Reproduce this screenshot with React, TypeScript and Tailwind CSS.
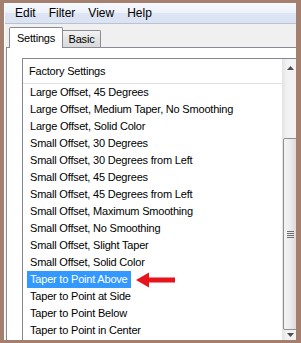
const presets = [
  "Large Offset, 45 Degrees",
  "Large Offset, Medium Taper, No Smoothing",
  "Large Offset, Solid Color",
  "Small Offset, 30 Degrees",
  "Small Offset, 30 Degrees from Left",
  "Small Offset, 45 Degrees",
  "Small Offset, 45 Degrees from Left",
  "Small Offset, Maximum Smoothing",
  "Small Offset, No Smoothing",
  "Small Offset, Slight Taper",
  "Small Offset, Solid Color",
  "Taper to Point Above",
  "Taper to Point at Side",
  "Taper to Point Below",
  "Taper to Point in Center",
];

const selected = "Taper to Point Above";

const RedArrow = () => (
  <svg width="40" height="16" viewBox="0 0 40 16" className="ml-[5px] shrink-0">
    <polygon points="0,8 13,0.5 13,5.5 39,5.5 39,10.5 13,10.5 13,15.5" fill="#e8141c" />
  </svg>
);

const ScrollBar = () => (
  <div className="w-[17px] shrink-0 flex flex-col bg-[linear-gradient(90deg,#e3e3e3,#f2f2f2_30%,#f2f2f2)]">
    <div className="h-[17px] flex items-center justify-center">
      <svg width="7" height="4" viewBox="0 0 7 4">
        <polygon points="0,4 3.5,0 7,4" fill="#4d4d4d" />
      </svg>
    </div>
    <div className="h-[62px]" />
    <div className="h-[192px] mx-[1px] rounded-[2px] border border-[#8f8f8f] bg-[linear-gradient(90deg,#f4f4f4,#ececec_45%,#d9d9d9)] flex items-center justify-center">
      <div className="flex flex-col gap-[1px]">
        <div className="w-[7px] h-[1px] bg-[#6f6f6f]" />
        <div className="w-[7px] h-[1px] bg-[#6f6f6f]" />
        <div className="w-[7px] h-[1px] bg-[#6f6f6f]" />
        <div className="w-[7px] h-[1px] bg-[#6f6f6f]" />
      </div>
    </div>
    <div className="h-[17px] flex justify-center pt-[3px]">
      <svg width="7" height="4" viewBox="0 0 7 4">
        <polygon points="0,0 3.5,4 7,0" fill="#4d4d4d" />
      </svg>
    </div>
  </div>
);

export default function App() {
  return (
    <div
      className="w-[301px] h-[343px] overflow-hidden bg-[#a47f6d] pt-[3px] pl-[4px] pr-[5px] pb-[3px] text-[11px] tracking-[-0.2px] text-black"
      style={{ fontFamily: "'Liberation Sans', Arial, sans-serif" }}
    >
      <div className="w-full h-full overflow-hidden bg-[#f0f0f0] border-l border-white flex flex-col">
        <div className="h-[21px] shrink-0 flex items-center gap-[13px] pl-[10px] text-[12px] tracking-normal border-b border-[#b9c2d3] bg-[linear-gradient(#f6f8fc_0%,#edf2fa_50%,#dde5f4_50%,#dbe3f3_100%)]">
          <span>Edit</span>
          <span>Filter</span>
          <span>View</span>
          <span>Help</span>
        </div>

        <div className="h-[23px] shrink-0 flex items-end pl-[4px]">
          <div className="relative z-10 -mb-[1px] h-[21px] w-[54px] flex items-center justify-center bg-white border border-b-0 border-[#898c95] rounded-t-[2px]">
            Settings
          </div>
          <div className="h-[17px] w-[38px] flex items-center justify-center border border-b-0 border-l-0 border-[#898c95] rounded-tr-[2px] bg-[linear-gradient(#f3f3f3,#e3e3e3_50%,#dadada)]">
            Basic
          </div>
        </div>

        <div className="flex-1 ml-[1px] bg-white border-l border-t border-[#898c95] pl-[15px] pt-[10px]">
          <div className="w-[278px] h-[300px] border border-[#828790] bg-white flex">
            <div className="w-[259px] shrink-0 flex flex-col">
              <div className="h-[25px] shrink-0 flex items-center pl-[6px] border-b border-[#e2e2e2]">
                Factory Settings
              </div>
              {presets.map((p) => (
                <div key={p} className="h-[17px] shrink-0 flex items-center pl-[4px] whitespace-nowrap">
                  {p === selected ? (
                    <>
                      <span className="h-[17px] flex items-center px-[3px] bg-[#3399ff] text-white">{p}</span>
                      <RedArrow />
                    </>
                  ) : (
                    <span className="px-[3px]">{p}</span>
                  )}
                </div>
              ))}
            </div>
            <ScrollBar />
          </div>
        </div>
      </div>
    </div>
  );
}
